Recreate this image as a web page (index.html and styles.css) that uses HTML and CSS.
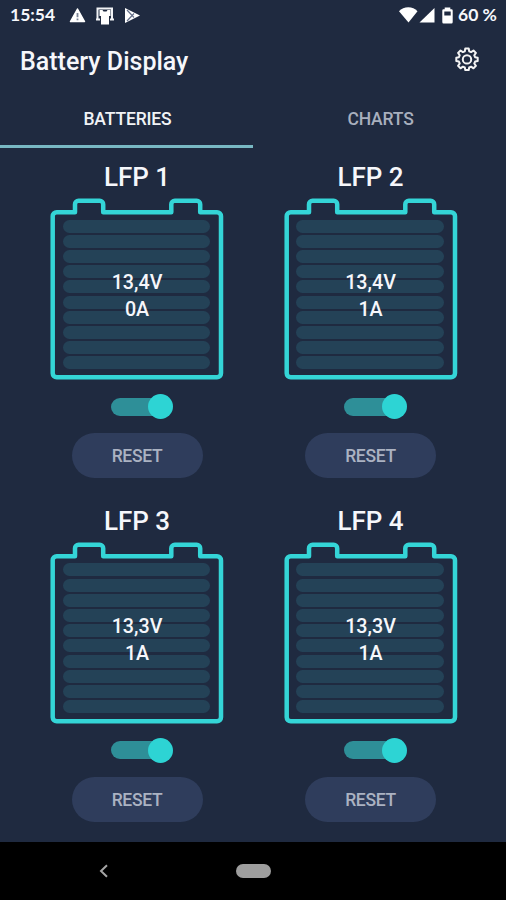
FILE: index.html
```html
<!DOCTYPE html>
<html lang="en">
<head>
<meta charset="utf-8">
<title>Battery Display</title>
<link rel="stylesheet" href="styles.css">
</head>
<body>
<svg class="defs" aria-hidden="true">
  <symbol id="battery" viewBox="0 0 174 182">
    <path class="outline" d="M2.700 18.200a4 4 0 0 1 4-4H25V6.200a3.500 3.500 0 0 1 3.500-3.500H49.700a3.500 3.500 0 0 1 3.500 3.500V14.200H121.300V6.200a3.500 3.500 0 0 1 3.500-3.500H146.700a3.500 3.500 0 0 1 3.500 3.500V14.200H167a4 4 0 0 1 4 4V175.300a4 4 0 0 1-4 4H6.700a4 4 0 0 1-4-4Z"/>
  </symbol>
</svg>
<div class="phone">
  <header class="status">
    <span class="clock">15:54</span>
    <svg class="notes" viewBox="0 0 76 22" width="76" height="22">
      <path fill="#fff" stroke="#fff" stroke-width="1.500" stroke-linejoin="round" d="M9.500 5 2.500 17.500h14z"/>
      <path stroke="#7a8496" stroke-width="1.800" d="M9.500 9v4.300M9.500 14.500v1.800"/>
      <path fill="none" stroke="#f2f3f6" stroke-width="2" d="M32 15.500h-4M29.500 15V4.500h14.500V15M46 15.500h-4"/>
      <path fill="#fff" d="M31.500 6h3l1 1.500h3L39.500 6h3v6h-1.500v8.500h-8V12h-1.500z"/>
      <path fill="#fff" d="M57 4v15l15-7.500z"/>
      <path fill="none" stroke="#66718a" stroke-width="1.200" d="m59 6 7 7.500M59 17l7-7.500"/>
    </svg>
    <svg class="radio" viewBox="0 0 56 22" width="56" height="22">
      <path fill="#fff" d="M0 7.300C4.500 2 14 2 18.500 7.300L9.500 18.500z"/>
      <path fill="#fff" d="M35.500 4V18.500H20.500z"/>
      <path fill="#fff" d="M45.700 3.500h5.600v1.700H52.500q1.200 0 1.200 1.200V18q0 1.500-1.200 1.500h-8q-1.200 0-1.200-1.500V6.400q0-1.200 1.200-1.200h1.200z"/>
      <path fill="#1f2a40" d="M45.300 7.500h6.400v4h-6.400z"/>
    </svg>
    <span class="level">60 %</span>
  </header>
  <div class="appbar">
    <h1>Battery Display</h1>
    <svg class="gear" viewBox="0 0 24 24" width="24" height="24" fill="none" stroke="#f4f4f4" stroke-width="2" stroke-linejoin="round">
      <path d="M10.300 1.500h3.400l.5 2.800 1.900.8 2.400-1.600 2.400 2.400-1.600 2.400.8 1.900 2.600.5v3.400l-2.600.5-.8 1.900 1.600 2.400-2.400 2.400-2.400-1.600-1.900.8-.5 2.600h-3.400l-.5-2.600-1.900-.8-2.400 1.600-2.400-2.400 1.600-2.400-.8-1.900-2.600-.5v-3.400l2.600-.5.800-1.900L3.100 5.900l2.400-2.400 2.400 1.600 1.900-.8z"/>
      <circle cx="12" cy="12.400" r="4.200"/>
    </svg>
  </div>
  <nav class="tabs">
    <span class="tab active">BATTERIES</span>
    <span class="tab">CHARTS</span>
  </nav>
  <main class="grid">
    <section class="cell">
      <h2>LFP 1</h2>
      <div class="battery">
        <svg class="case"><use href="#battery"/></svg>
        <div class="bars"><i></i><i></i><i></i><i></i><i></i><i></i><i></i><i></i><i></i><i></i></div>
        <div class="reading"><span>13,4V</span><span>0A</span></div>
      </div>
      <div class="switch"><b></b></div>
      <div class="reset">RESET</div>
    </section>
    <section class="cell">
      <h2>LFP 2</h2>
      <div class="battery">
        <svg class="case"><use href="#battery"/></svg>
        <div class="bars"><i></i><i></i><i></i><i></i><i></i><i></i><i></i><i></i><i></i><i></i></div>
        <div class="reading"><span>13,4V</span><span>1A</span></div>
      </div>
      <div class="switch"><b></b></div>
      <div class="reset">RESET</div>
    </section>
    <section class="cell">
      <h2>LFP 3</h2>
      <div class="battery">
        <svg class="case"><use href="#battery"/></svg>
        <div class="bars"><i></i><i></i><i></i><i></i><i></i><i></i><i></i><i></i><i></i><i></i></div>
        <div class="reading"><span>13,3V</span><span>1A</span></div>
      </div>
      <div class="switch"><b></b></div>
      <div class="reset">RESET</div>
    </section>
    <section class="cell">
      <h2>LFP 4</h2>
      <div class="battery">
        <svg class="case"><use href="#battery"/></svg>
        <div class="bars"><i></i><i></i><i></i><i></i><i></i><i></i><i></i><i></i><i></i><i></i></div>
        <div class="reading"><span>13,3V</span><span>1A</span></div>
      </div>
      <div class="switch"><b></b></div>
      <div class="reset">RESET</div>
    </section>
  </main>
  <footer class="navbar">
    <svg class="back" viewBox="0 0 10 14" width="10" height="14"><path fill="none" stroke="#a5a5a5" stroke-width="2" d="M8 1.200 2 7l6 5.800"/></svg>
    <span class="home"></span>
  </footer>
</div>
</body>
</html>
```

FILE: styles.css
```css
* { box-sizing: border-box; }
body { margin: 0; background: #1f2a40; font-family: Roboto, sans-serif; color: #f6f7fb; }
.defs { display: none; }
.phone { width: 506px; height: 900px; display: flex; flex-direction: column; overflow: hidden; }

.status { height: 32px; display: flex; align-items: flex-start; padding: 4px 9px 0 10px; line-height: 22px; font-family: Lato, sans-serif; font-size: 17.500px; font-weight: 700; white-space: nowrap; }
.clock { width: 46px; }
.notes { margin: 0 0 0 12px; }
.radio { margin-left: auto; }
.level { margin-left: 3px; width: 39px; }

.appbar { height: 58px; display: flex; justify-content: space-between; align-items: center; padding: 0 27px 5px 20px; }
h1 { margin: 0; padding-top: 6px; font-size: 25px; font-weight: 500; line-height: 32px; white-space: nowrap; }

.tabs { height: 58px; display: grid; grid-template-columns: 253px 253px; }
.tab { text-align: center; line-height: 58px; font-size: 17.500px; letter-spacing: -.15px; font-weight: 500; color: #a8afbd; height: 58px; padding: 0 0 0 2px; }
.tab.active { color: #f1f3f6; border-bottom: 3px solid #78b8c3; }

.grid { height: 694px; padding: 10px 0 0 20.250px; display: grid; grid-template-columns: 233.500px 233.500px; grid-template-rows: 343.800px 343.800px; }
.cell { display: flex; flex-direction: column; align-items: center; }
h2 { margin: 0; height: 40px; line-height: 38px; font-size: 26px; font-weight: 500; }
.battery { width: 174px; height: 182px; display: grid; }
.battery > * { grid-area: 1 / 1; }
.case { width: 174px; height: 182px; }
.outline { fill: none; stroke: #34d5d7; stroke-width: 4.500px; stroke-linejoin: round; }
.bars { padding: 21.700px 14px 10.700px 12.800px; display: flex; flex-direction: column; gap: 2.300px; }
.bars i { height: 12.900px; border-radius: 6.500px; background: #244257; }
.reading { display: flex; flex-direction: column; align-items: center; padding-top: 71.300px; line-height: 27px; font-size: 19.700px; font-weight: 500; }
.switch { width: 62.500px; height: 25px; margin: 14px 0 0 10px; display: grid; align-items: center; }
.switch::before { content: ""; grid-area: 1 / 1; width: 50px; height: 18px; border-radius: 9px; background: #2e8f98; }
.switch b { grid-area: 1 / 1; justify-self: end; width: 25px; height: 25px; border-radius: 50%; background: #2dd4d4; }
.reset { width: 131px; height: 45px; margin-top: 14px; border-radius: 23px; background: #2f3d5c; color: #abb2c2; text-align: center; line-height: 47px; font-size: 17.500px; letter-spacing: -.3px; font-weight: 500; }

.navbar { height: 58px; background: #000; display: flex; align-items: center; padding-left: 99px; }
.home { width: 35px; height: 13.500px; margin-left: 127px; border-radius: 7px; background: #9e9e9e; }
```
